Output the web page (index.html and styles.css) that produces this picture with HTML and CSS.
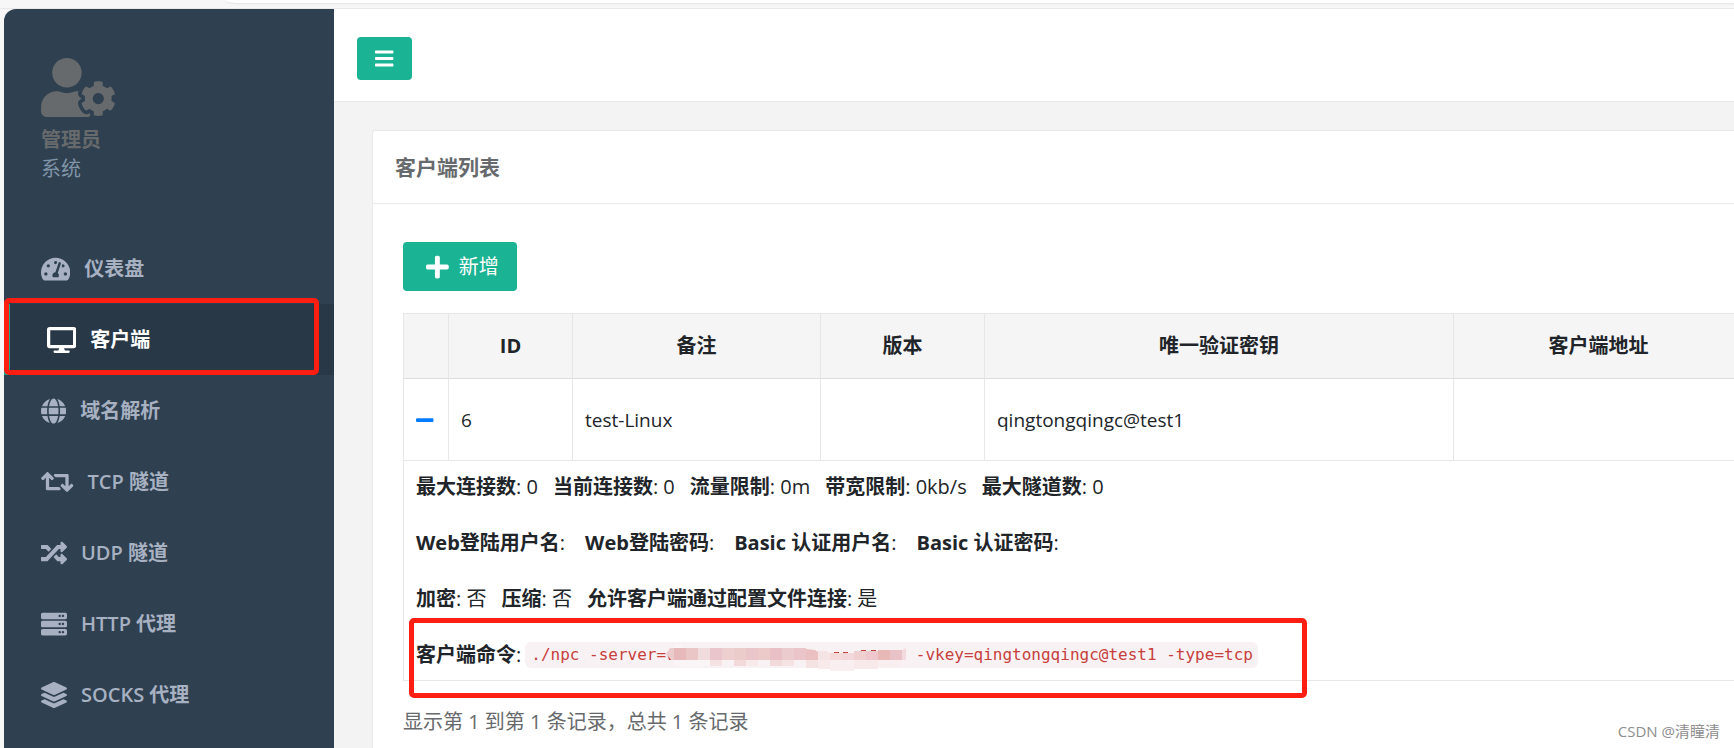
FILE: index.html
```html
<!DOCTYPE html>
<html lang="zh-CN">
<head>
<meta charset="utf-8">
<title>客户端列表</title>
<link rel="stylesheet" href="styles.css">
</head>
<body>
<div class="chrome"><div class="chrome-bar"></div></div>
<div class="app">
  <aside class="sidebar">
    <div class="profile">
      <svg class="avatar" viewBox="0 0 640 512" aria-hidden="true"><path d="M610.5 373.3c2.6-14.1 2.6-28.5 0-42.6l25.8-14.9c3-1.7 4.3-5.2 3.3-8.5-6.7-21.6-18.2-41.2-33.2-57.4-2.3-2.5-6-3.1-9-1.4l-25.8 14.9c-10.9-9.3-23.4-16.5-36.9-21.3v-29.8c0-3.4-2.4-6.4-5.7-7.1-22.3-5-45-4.8-66.2 0-3.3.7-5.7 3.7-5.7 7.1v29.8c-13.5 4.8-26 12-36.9 21.3l-25.8-14.9c-2.9-1.7-6.7-1.1-9 1.4-15 16.2-26.5 35.8-33.2 57.4-1 3.3.4 6.8 3.3 8.5l25.8 14.9c-2.6 14.1-2.6 28.5 0 42.6l-25.8 14.9c-3 1.7-4.3 5.2-3.3 8.5 6.7 21.6 18.2 41.1 33.2 57.4 2.3 2.5 6 3.1 9 1.4l25.8-14.9c10.9 9.3 23.4 16.5 36.9 21.3v29.8c0 3.4 2.4 6.4 5.7 7.1 22.3 5 45 4.8 66.2 0 3.3-.7 5.7-3.7 5.7-7.1v-29.8c13.5-4.8 26-12 36.9-21.3l25.8 14.9c2.9 1.7 6.7 1.1 9-1.4 15-16.2 26.5-35.8 33.2-57.4 1-3.3-.4-6.8-3.3-8.5l-25.8-14.9zM496 400.5c-26.8 0-48.5-21.8-48.5-48.5s21.8-48.5 48.5-48.5 48.5 21.8 48.5 48.5-21.7 48.5-48.5 48.5zM224 256c70.7 0 128-57.3 128-128S294.7 0 224 0 96 57.3 96 128s57.3 128 128 128zm201.2 226.5c-2.3-1.2-4.6-2.6-6.8-3.9l-7.9 4.6c-6 3.4-12.8 5.3-19.6 5.3-10.9 0-21.4-4.6-28.9-12.6-18.3-19.8-32.3-43.9-40.2-69.6-5.5-17.7 1.9-36.4 17.9-45.7l7.9-4.6c-.1-2.6-.1-5.2 0-7.8l-7.9-4.6c-16-9.2-23.4-28-17.9-45.7.9-2.9 2.2-5.8 3.2-8.7-3.8-.3-7.5-1.2-11.4-1.2h-16.7c-22.2 10.2-46.9 16-72.9 16s-50.6-5.8-72.9-16h-16.7C60.2 288 0 348.2 0 422.4V464c0 26.5 21.5 48 48 48h352c10.1 0 19.5-3.2 27.2-8.5-1.2-3.8-2-7.7-2-11.8v-9.2z"/></svg>
      <strong class="profile-name">管理员</strong>
      <span class="profile-role">系统</span>
    </div>
    <nav class="menu">
      <a class="menu-item" href="#"><svg class="icon" viewBox="0 0 576 512" aria-hidden="true"><path d="M288 32C128.94 32 0 160.94 0 320c0 52.8 14.25 102.26 39.06 144.8 5.61 9.62 16.3 15.2 27.44 15.2h443c11.14 0 21.83-5.58 27.44-15.2C561.75 422.26 576 372.8 576 320c0-159.06-128.94-288-288-288zm0 64c14.71 0 26.58 10.13 30.32 23.65-1.11 2.26-2.64 4.23-3.45 6.67l-9.22 27.67c-5.13 3.49-10.97 6.01-17.64 6.01-17.67 0-32-14.33-32-32S270.33 96 288 96zM96 384c-17.67 0-32-14.33-32-32s14.33-32 32-32 32 14.33 32 32-14.33 32-32 32zm48-160c-17.67 0-32-14.33-32-32s14.33-32 32-32 32 14.33 32 32-14.33 32-32 32zm246.77-72.41l-61.33 184C343.13 347.33 352 364.54 352 384c0 11.72-3.38 22.55-8.88 32H232.88c-5.5-9.45-8.88-20.28-8.88-32 0-33.94 26.5-61.43 59.9-63.59l61.34-184.01c4.17-12.56 17.73-19.45 30.36-15.17 12.57 4.19 19.35 17.79 15.17 30.36zm14.66 57.2l15.52-46.55c3.47-1.29 7.13-2.23 11.05-2.23 17.67 0 32 14.33 32 32s-14.33 32-32 32c-11.38-.01-20.89-6.28-26.57-15.22zM480 384c-17.67 0-32-14.33-32-32s14.33-32 32-32 32 14.33 32 32-14.33 32-32 32z"/></svg><span>仪表盘</span></a>
      <a class="menu-item active" href="#" aria-current="page"><svg class="icon" viewBox="0 0 576 512" aria-hidden="true"><path d="M528 0H48C21.5 0 0 21.5 0 48v320c0 26.5 21.5 48 48 48h192l-16 48h-72c-13.3 0-24 10.7-24 24s10.7 24 24 24h272c13.3 0 24-10.7 24-24s-10.7-24-24-24h-72l-16-48h192c26.5 0 48-21.5 48-48V48c0-26.5-21.5-48-48-48zm-16 352H64V64h448v288z"/></svg><span>客户端</span></a>
      <a class="menu-item" href="#"><svg class="icon" viewBox="0 0 496 512" aria-hidden="true"><path d="M336.5 160C322 70.7 287.8 8 248 8s-74 62.7-88.5 152h177zM152 256c0 22.2 1.2 43.5 3.3 64h185.3c2.1-20.5 3.3-41.8 3.3-64s-1.2-43.5-3.3-64H155.3c-2.1 20.5-3.3 41.8-3.3 64zm324.7-96c-28.6-67.9-86.5-120.4-158-141.6 24.4 33.8 41.2 84.7 50 141.6h108zM177.2 18.4C105.8 39.6 47.8 92.1 19.3 160h108c8.7-56.9 25.5-107.8 49.9-141.6zM487.4 192H372.7c2.1 21 3.3 42.5 3.3 64s-1.2 43-3.3 64h114.6c5.5-20.5 8.6-41.8 8.6-64s-3.1-43.5-8.5-64zM120 256c0-21.5 1.2-43 3.3-64H8.6C3.2 212.5 0 233.8 0 256s3.2 43.5 8.6 64h114.6c-2-21-3.2-42.5-3.2-64zm39.5 96c14.5 89.3 48.7 152 88.5 152s74-62.7 88.5-152h-177zm159.3 141.6c71.4-21.2 129.4-73.7 158-141.6h-108c-8.8 56.9-25.6 107.8-50 141.6zM19.3 352c28.6 67.9 86.5 120.4 158 141.6-24.4-33.8-41.2-84.7-50-141.6h-108z"/></svg><span>域名解析</span></a>
      <a class="menu-item" href="#"><svg class="icon" viewBox="0 0 640 512" aria-hidden="true"><path d="M629.657 343.598L528.971 444.284c-9.373 9.372-24.568 9.372-33.941 0L394.343 343.598c-9.373-9.373-9.373-24.569 0-33.941l10.823-10.823c9.562-9.562 25.133-9.34 34.419.492L480 342.118V160H292.451a24.005 24.005 0 0 1-16.971-7.029l-16-16C244.361 121.851 255.069 96 276.451 96H520c13.255 0 24 10.745 24 24v222.118l40.416-42.792c9.285-9.831 24.856-10.054 34.419-.492l10.823 10.823c9.372 9.372 9.372 24.569-.001 33.941zm-265.138 15.431A23.999 23.999 0 0 0 347.548 352H160V169.881l40.416 42.792c9.286 9.831 24.856 10.054 34.419.491l10.822-10.822c9.373-9.373 9.373-24.569 0-33.941L144.971 67.716c-9.373-9.373-24.569-9.373-33.941 0L10.343 168.402c-9.373 9.373-9.373 24.569 0 33.941l10.822 10.822c9.562 9.562 25.133 9.34 34.419-.491L96 169.881V392c0 13.255 10.745 24 24 24h243.549c21.382 0 32.09-25.851 16.971-40.971l-16.001-16z"/></svg><span>TCP 隧道</span></a>
      <a class="menu-item" href="#"><svg class="icon" viewBox="0 0 512 512" aria-hidden="true"><path d="M504.971 359.029c9.373 9.373 9.373 24.569 0 33.941l-80 79.984c-15.01 15.01-40.971 4.49-40.971-16.971V416h-58.785a12.004 12.004 0 0 1-8.773-3.812l-70.556-75.596 53.333-57.143L352 336h32v-39.981c0-21.438 25.943-31.998 40.971-16.971l80 79.981zM12 176h84l52.781 56.551 53.333-57.143-70.556-75.596A11.999 11.999 0 0 0 122.785 96H12c-6.627 0-12 5.373-12 12v56c0 6.627 5.373 12 12 12zm372 0v39.984c0 21.46 25.961 31.98 40.971 16.971l80-79.984c9.373-9.373 9.373-24.569 0-33.941l-80-79.981C409.943 24.021 384 34.582 384 56.019V96h-58.785a12.004 12.004 0 0 0-8.773 3.812L96 336H12c-6.627 0-12 5.373-12 12v56c0 6.627 5.373 12 12 12h110.785c3.326 0 6.503-1.381 8.773-3.812L352 176h32z"/></svg><span>UDP 隧道</span></a>
      <a class="menu-item" href="#"><svg class="icon" viewBox="0 0 512 512" aria-hidden="true"><path id="rack" d="M480 160H32c-17.673 0-32-14.327-32-32V64c0-17.673 14.327-32 32-32h448c17.673 0 32 14.327 32 32v64c0 17.673-14.327 32-32 32zm-48-88c-13.255 0-24 10.745-24 24s10.745 24 24 24 24-10.745 24-24-10.745-24-24-24zm-64 0c-13.255 0-24 10.745-24 24s10.745 24 24 24 24-10.745 24-24-10.745-24-24-24z"/><use href="#rack" y="160"/><use href="#rack" y="320"/></svg><span>HTTP 代理</span></a>
      <a class="menu-item" href="#"><svg class="icon" viewBox="0 0 512 512" aria-hidden="true"><path d="M12.41 148.02l232.94 105.67c6.8 3.09 14.49 3.09 21.29 0l232.94-105.67c16.55-7.51 16.55-32.52 0-40.03L266.65 2.31a25.607 25.607 0 0 0-21.29 0L12.41 107.98c-16.55 7.51-16.55 32.53 0 40.04zm487.18 88.28l-58.09-26.33-161.64 73.27c-7.56 3.43-15.59 5.17-23.86 5.17s-16.29-1.74-23.86-5.17L70.51 209.97l-58.1 26.33c-16.55 7.5-16.55 32.5 0 40l232.94 105.59c6.8 3.08 14.49 3.08 21.29 0L499.59 276.3c16.55-7.5 16.55-32.5 0-40zm0 127.8l-57.87-26.23-161.86 73.37c-7.56 3.43-15.59 5.17-23.86 5.17s-16.29-1.74-23.86-5.17L70.29 337.87 12.41 364.1c-16.55 7.5-16.55 32.5 0 40l232.94 105.59c6.8 3.08 14.49 3.08 21.29 0L499.59 404.1c16.55-7.5 16.55-32.5 0-40z"/></svg><span>SOCKS 代理</span></a>
    </nav>
  </aside>
  <main class="main">
    <header class="topbar">
      <button class="btn toggle" type="button" aria-label="菜单"><svg viewBox="0 0 448 512" aria-hidden="true"><path d="M16 132h416c8.837 0 16-7.163 16-16V76c0-8.837-7.163-16-16-16H16C7.163 60 0 67.163 0 76v40c0 8.837 7.163 16 16 16zm0 160h416c8.837 0 16-7.163 16-16v-40c0-8.837-7.163-16-16-16H16c-8.837 0-16 7.163-16 16v40c0 8.837 7.163 16 16 16zm0 160h416c8.837 0 16-7.163 16-16v-40c0-8.837-7.163-16-16-16H16c-8.837 0-16 7.163-16 16v40c0 8.837 7.163 16 16 16z"/></svg></button>
    </header>
    <section class="panel">
      <h1 class="panel-title">客户端列表</h1>
      <div class="panel-body">
        <button class="btn add" type="button"><svg class="icon" viewBox="0 0 448 512" aria-hidden="true"><path d="M416 208H272V64c0-17.67-14.33-32-32-32h-32c-17.67 0-32 14.33-32 32v144H32c-17.67 0-32 14.33-32 32v32c0 17.67 14.33 32 32 32h144v144c0 17.67 14.33 32 32 32h32c17.67 0 32-14.33 32-32V304h144c17.67 0 32-14.33 32-32v-32c0-17.67-14.33-32-32-32z"/></svg><span>新增</span></button>
        <table class="clients">
          <colgroup><col class="c-toggle"><col class="c-id"><col class="c-note"><col class="c-version"><col class="c-key"><col></colgroup>
          <thead><tr><th></th><th>ID</th><th>备注</th><th>版本</th><th>唯一验证密钥</th><th>客户端地址</th></tr></thead>
          <tbody>
            <tr class="row"><td><a class="collapse" href="#" aria-label="收起"><svg viewBox="0 0 448 512" aria-hidden="true"><path d="M416 208H32c-17.67 0-32 14.33-32 32v32c0 17.67 14.33 32 32 32h384c17.67 0 32-14.33 32-32v-32c0-17.67-14.33-32-32-32z"/></svg></a></td><td>6</td><td>test-Linux</td><td></td><td>qingtongqingc@test1</td><td></td></tr>
            <tr><td class="detail" colspan="6">
              <p class="pairs"><span><b>最大连接数</b>: 0</span><span><b>当前连接数</b>: 0</span><span><b>流量限制</b>: 0m</span><span><b>带宽限制</b>: 0kb/s</span><span><b>最大隧道数</b>: 0</span></p>
              <p class="pairs wide"><span><b>Web登陆用户名</b>:</span><span><b>Web登陆密码</b>:</span><span><b>Basic 认证用户名</b>:</span><span><b>Basic 认证密码</b>:</span></p>
              <p class="pairs"><span><b>加密</b>: 否</span><span><b>压缩</b>: 否</span><span><b>允许客户端通过配置文件连接</b>: 是</span></p>
              <p class="command"><span><b>客户端命令</b>:</span><code>./npc -server=<svg class="mosaic" viewBox="0 0 240 26" aria-hidden="true">
                <path fill="#faf5f6" d="M8 3h8v3H8zM8 18h36v6H8z"/>
                <path fill="#ebcbcb" d="M0 12l4-6h4v12H3z"/>
                <path fill="#e8b9bb" d="M8 6h12v12H8z"/>
                <path fill="#ebc6c6" d="M20 6h12v12H20z"/>
                <path fill="#f0dbdd" d="M32 6h12v12H32z"/>
                <path fill="#eac5cb" d="M44 6h12v12H44z"/>
                <path fill="#edcfcf" d="M56 6h12v12H56z"/>
                <path fill="#ebcccb" d="M68 6h12v12H68z"/>
                <path fill="#eac5c9" d="M80 6h12v12H80z"/>
                <path fill="#ebcac9" d="M92 6h12v12H92z"/>
                <path fill="#e9c0c6" d="M104 6h12v12h-12z"/>
                <path fill="#ebcbce" d="M116 6h12v12h-12z"/>
                <path fill="#ebc5c9" d="M128 6h12v12h-12z"/>
                <path fill="#eac0c0" d="M140 7l9 1 3 2v8h-12z"/>
                <path fill="#f5e4e6" d="M152 9h8l4 2v7h-12z"/>
                <path fill="#f5dada" d="M164 11h12v7h-12z"/>
                <path fill="#f2d8da" d="M176 11h12v7h-12z"/>
                <path fill="#f0cfd1" d="M188 9h12v9h-12z"/>
                <path fill="#eec8cc" d="M200 9h12v9h-12z"/>
                <path fill="#e8b8b6" d="M212 8h12v10h-12z"/>
                <path fill="#e9c2c7" d="M224 8h12v10h-12z"/>
                <path fill="#f2dade" d="M236 8l4-2v12h-4z"/>
                <path fill="#f5e3e3" d="M44 18h12v6H44zM116 18h12v6h-12zM140 18h12v8h-12z"/>
                <path fill="#f2dadb" d="M68 18h12v6H68zM104 18h12v6h-12z"/>
                <path fill="#f8eaea" d="M80 18h12v6H80zM152 18h12v9h-12zM188 18h24v9h-24z"/>
                <path fill="#faeff0" d="M164 18h24v11h-24zM212 18h24v7h-24z"/>
                <path fill="#c7403c" d="M2 14l3 4H3zM168 10h5v1h-5zM177 10h5v1h-5zM195 8h5v1h-5zM205 8h5v1h-5z"/>
              </svg> -vkey=qingtongqingc@test1 -type=tcp</code></p>
            </td></tr>
          </tbody>
        </table>
        <p class="summary">显示第 1 到第 1 条记录，总共 1 条记录</p>
      </div>
    </section>
  </main>
</div>
<div class="watermark">CSDN @清瞳清</div>
</body>
</html>
```
FILE: styles.css
```css
*, *::after { box-sizing: border-box; }
body {
  margin: 0;
  height: 100vh;
  display: flex;
  flex-direction: column;
  overflow: hidden;
  background: #f7f7f7;
  color: #676a6c;
  font: 20px/30px "Open Sans", "Noto Sans CJK SC", sans-serif;
}
svg { display: block; fill: currentColor; }
p, h1 { margin: 0; }
a { color: inherit; text-decoration: none; }

.chrome { height: 9px; flex: none; padding-left: 226px; border-bottom: 1px solid #e9e9ea; }
.chrome-bar { height: 3px; background: #fff; border-bottom-left-radius: 12px 3px; box-shadow: 0 1px 2px #e4e4e4; }

.app { flex: 1; min-height: 0; display: flex; margin-left: 4px; border-top-left-radius: 12px; overflow: hidden; background: #f3f3f4; }
.sidebar { width: 330px; flex: none; background: #2f4050; }
.profile { display: flex; flex-direction: column; padding: 49px 37px 50px; line-height: 29px; }
.avatar { width: 74px; height: 59px; margin-bottom: 8px; }
.profile-role { color: #8095a8; }

.menu-item { position: relative; display: flex; align-items: center; gap: 14px; height: 71px; padding: 0 37px; color: #a7b1c2; font-weight: 600; }
.menu-item.active { color: #fff; background: #293846; border-left: 6px solid #19aa8d; }
.menu-item.active::after { content: ""; position: absolute; inset: -6px 15px 0 -6px; border: 5px solid #ff1f12; border-radius: 5px; }
.icon { height: 26px; }

.main { flex: 1; min-width: 0; }
.topbar { padding: 28px 23px 21px; background: #fff; border-bottom: 1px solid #e7eaec; }
.btn { display: flex; align-items: center; justify-content: center; border: 0; border-radius: 4px; background: #1ab394; color: #fff; font: inherit; }
.toggle { width: 55px; height: 43px; }
.toggle svg { height: 21px; }

.panel { margin: 28px 0 0 38px; height: 100%; background: #fff; border: 1px solid #e7eaec; border-right: 0; border-radius: 3px 0 0 0; }
.panel-title { padding: 22px; font-size: 21px; line-height: 28px; font-weight: 700; border-bottom: 1px solid #e7eaec; }
.panel-body { padding: 38px 0 0 30px; }
.add { gap: 10px; padding: 0 18px 0 23px; height: 49px; margin-bottom: 22px; }

.clients { width: calc(100% + 10px); table-layout: fixed; border-collapse: collapse; color: #212529; }
.c-toggle { width: 45px; }
.c-id { width: 124px; }
.c-note { width: 248px; }
.c-version { width: 164px; }
.c-key { width: 469px; }
.clients th, .clients td { padding: 0 12px; border: 1px solid #e7e7e7; text-align: left; }
.clients th { height: 65px; background: #f5f5f6; border-bottom-color: #ddd; text-align: center; font-weight: 700; }
.row { height: 82px; font-size: 19px; }
.collapse { color: #007bff; }
.collapse svg { height: 20px; }
.clients .detail { padding-top: 11px; padding-bottom: 11px; }
.detail p { line-height: 29px; margin-bottom: 27px; }
.detail p:last-child { margin-bottom: 0; }
.detail b { font-weight: 700; }
.pairs { display: flex; gap: 15px; }
.pairs.wide { gap: 20px; }
.command { position: relative; display: flex; align-items: center; gap: 4px; white-space: pre; }
.command::after { content: ""; position: absolute; left: -7px; top: -22px; width: 898px; height: 80px; border: 5px solid #ff1f12; border-radius: 5px; }
code { display: flex; align-items: center; height: 26px; padding: 0 5px 0 6px; border-radius: 6px; background: #f9f2f4; color: #c7403c; font: 16px/26px "DejaVu Sans Mono", monospace; }
.mosaic { width: 240px; height: 26px; overflow: visible; }
.summary { margin-top: 26px; }

.watermark { position: absolute; right: 14px; bottom: 7px; color: #8e8e8e; font-size: 15px; line-height: 20px; }
```
